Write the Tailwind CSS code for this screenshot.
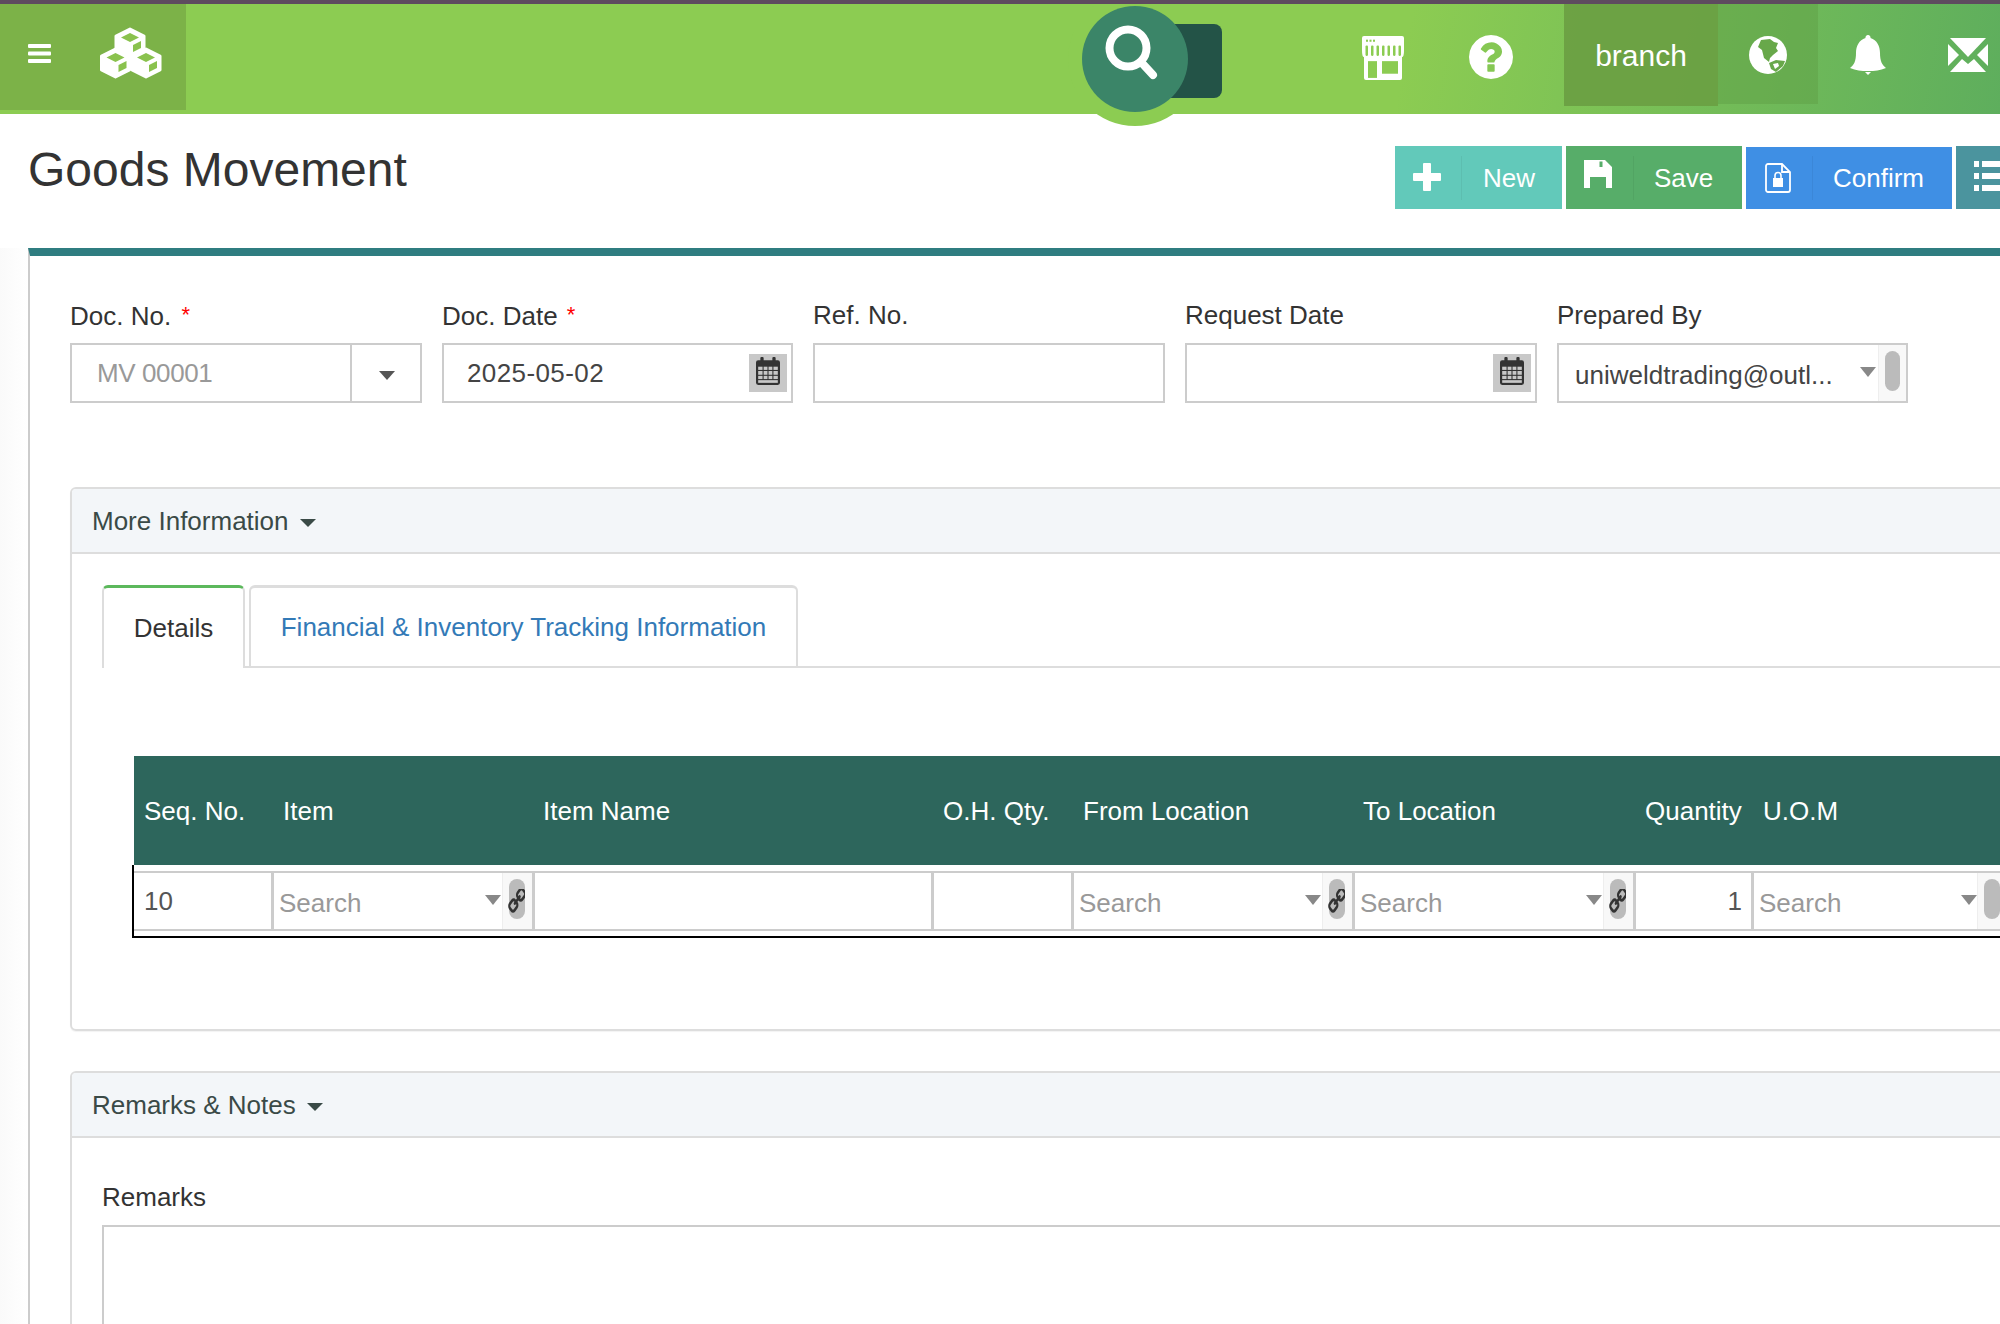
<!DOCTYPE html>
<html lang="en">
  <head>
    <meta charset="UTF-8" />
    <title>Goods Movement</title>
    <script src="https://cdn.jsdelivr.net/npm/@tailwindcss/browser@4"></script>
  </head>
  <body class="h-[1324px] w-[2000px] overflow-hidden bg-white font-['Liberation_Sans',Arial,sans-serif] text-[26px] leading-[36px] text-[#333]">
    <div class="relative z-20 h-[4px] bg-[#5e4b5f]"></div>

    <!-- top bar -->
    <header class="relative z-10 flex h-[110px] items-start bg-[linear-gradient(100deg,#8ccc52_70%,#5eae5d_100%)]">
      <div class="flex h-[106px] w-[186px] shrink-0 items-start bg-[#7cb248] pl-[28px] pt-[40px]">
        <svg class="w-[23px] h-[19px]" viewBox="0 0 23 19" fill="#fff"><rect width="23" height="4" rx="1"/><rect y="7.500" width="23" height="4" rx="1"/><rect y="15" width="23" height="4" rx="1"/></svg>
        <svg class="ml-[49px] mt-[-17px] w-[62px] h-[52px]" viewBox="0 0 62 52">
          <g transform="translate(30 16)"><path d="M0-14 14-7V7L0 14-14 7V-7Z" fill="#fff" stroke="#fff" stroke-width="3" stroke-linejoin="round"/><path d="M0-10 9-5.500 0-1-9-5.500Z" fill="#8ac24e"/><path d="M3 2 11-2V5L3 9Z" fill="#8ac24e"/></g>
          <g transform="translate(15.500 36)"><path d="M0-14 14-7V7L0 14-14 7V-7Z" fill="#fff" stroke="#fff" stroke-width="3" stroke-linejoin="round"/><path d="M0-10 9-5.500 0-1-9-5.500Z" fill="#8ac24e"/><path d="M3 2 11-2V5L3 9Z" fill="#8ac24e"/></g>
          <g transform="translate(46 36)"><path d="M0-14 14-7V7L0 14-14 7V-7Z" fill="#fff" stroke="#fff" stroke-width="3" stroke-linejoin="round"/><path d="M0-10 9-5.500 0-1-9-5.500Z" fill="#8ac24e"/><path d="M3 2 11-2V5L3 9Z" fill="#8ac24e"/></g>
        </svg>
      </div>

      <div class="ml-[1176px] mt-[32px] flex items-start">
        <svg class="w-[42px] h-[44px]" viewBox="0 0 42 42" preserveAspectRatio="none">
          <path d="M2 0H40A2 2 0 0 1 42 2V14Q42 20 40 20V40A2 2 0 0 1 38 42H4A2 2 0 0 1 2 40V20Q0 20 0 14V2A2 2 0 0 1 2 0Z" fill="#fff"/>
          <g fill="#8ccc52"><rect x="4" y="3.500" width="2" height="2"/><rect x="7.500" y="3.500" width="2" height="2"/><rect x="11" y="3.500" width="2" height="2"/><rect x="3.500" y="9" width="2.500" height="10" rx="1"/><rect x="9" y="9" width="2.500" height="10" rx="1"/><rect x="14.500" y="9" width="2.500" height="10" rx="1"/><rect x="20" y="9" width="2.500" height="10" rx="1"/><rect x="25.500" y="9" width="2.500" height="10" rx="1"/><rect x="31" y="9" width="2.500" height="10" rx="1"/><rect x="36.500" y="9" width="2.500" height="10" rx="1"/><rect x="6" y="24" width="9" height="16"/><rect x="20" y="24" width="16" height="12"/></g>
        </svg>
        <svg class="ml-[65px] mt-[-1px] w-[44px] h-[44px]" viewBox="128 128 1536 1536" fill="#fff"><path d="M1024 1376v-192q0-14-9-23t-23-9h-192q-14 0-23 9t-9 23v192q0 14 9 23t23 9h192q14 0 23-9t9-23zm256-672q0-88-55.500-163t-138.500-116-170-41q-243 0-371 213-15 24 8 42l132 100q7 6 19 6 16 0 25-12 53-68 86-92 34-24 86-24 48 0 85.500 26t37.500 59q0 38-20 61t-68 45q-63 28-115.500 86.500t-52.500 125.500v36q0 14 9 23t23 9h192q14 0 23-9t9-23q0-19 21.500-49.500t54.500-49.500q32-18 49-28.500t46-35 44.500-48 28-60.500 12.500-81zm384 192q0 209-103 385.500t-279.500 279.500-385.500 103-385.500-103-279.500-279.500-103-385.500 103-385.500 279.500-279.500 385.500-103 385.500 103 279.500 279.500 103 385.500z"/></svg>
      </div>

      <div class="ml-[51px] flex h-[102px] w-[154px] shrink-0 items-center justify-center bg-[#6a9f43]/90 pt-[2px] text-[30px] text-white">branch</div>
      <div class="flex h-[100px] w-[100px] shrink-0 items-start justify-center bg-[#5f9f45]/50 pt-[32px]">
        <svg class="w-[38px] h-[38px]" viewBox="0 0 38 38">
          <circle cx="19" cy="19" r="19" fill="#fff"/>
          <path d="M12 4 21 3 25 6 29 7 27 12 29 15 24 19 21 22 20 26 15 22 13 14 9 11Z" fill="#68a84a"/>
          <path d="M20 27 27 24 36 25 34 30 27 36 22 33Z" fill="#68a84a"/>
          <path d="M24 28 29 27 30 30 26 33Z" fill="#fff"/>
        </svg>
      </div>
      <svg class="ml-[32px] mt-[31px] w-[36px] h-[40px]" viewBox="0 0 36 40" fill="#fff">
        <path d="M18 0A2.500 2.500 0 0 1 20.500 3C27 5 30 11 30 18 30 26 32 30 36 33 30 35.500 25 36 18 36 11 36 6 35.500 0 33 4 30 6 26 6 18 6 11 9 5 15.500 3A2.500 2.500 0 0 1 18 0Z"/><path d="M15 37H21L18 40Z"/>
      </svg>
      <svg class="ml-[62px] mt-[34px] w-[40px] h-[34px]" viewBox="0 0 40 34" fill="#fff">
        <path d="M2 0H38L20 19Z"/><path d="M0 6V28L11 17Z"/><path d="M40 6V28L29 17Z"/><path d="M2 34H38L26 21 20 26 14 21Z"/>
      </svg>

      <!-- search button sits over the bar edge -->
      <div class="absolute left-[1068px] top-[-12px] h-[134px] w-[134px] rounded-full bg-[#8ccc52]">
        <div class="absolute left-[100px] top-[32px] h-[74px] w-[54px] rounded-r-[8px] bg-[#235347]"></div>
        <div class="absolute left-[14px] top-[14px] h-[106px] w-[106px] rounded-full bg-[#3b8568]">
          <svg class="w-[106px] h-[106px]" viewBox="0 0 106 106" fill="none" stroke="#fff" stroke-width="8" stroke-linecap="round"><circle cx="46" cy="42" r="18.500"/><path d="M59 56 71 69"/></svg>
        </div>
      </div>
    </header>

    <!-- title and actions -->
    <div class="flex h-[134px] justify-between">
      <h1 class="pl-[28px] pt-[28px] text-[48px] leading-[56px]">Goods Movement</h1>
      <div class="flex gap-[4px] pt-[32px] text-white">
        <button class="flex h-[63px] w-[167px] items-center bg-[#62c9ba]">
          <span class="flex w-[66px] justify-center pb-[2px] pr-[2px]"><svg class="w-[28px] h-[28px]" viewBox="0 0 28 28" fill="#fff"><path d="M10 1A1 1 0 0 1 11 0H17A1 1 0 0 1 18 1V10H27A1 1 0 0 1 28 11V17A1 1 0 0 1 27 18H18V27A1 1 0 0 1 17 28H11A1 1 0 0 1 10 27V18H1A1 1 0 0 1 0 17V11A1 1 0 0 1 1 10H10Z"/></svg></span>
          <span class="h-[44px] w-px bg-black/5"></span>
          <span class="pl-[21px]">New</span>
        </button>
        <button class="flex h-[63px] w-[176px] items-center bg-[#57ad69]">
          <span class="flex w-[67px] justify-center pb-[8px] pr-[3px]"><svg class="w-[28px] h-[28px]" viewBox="0 0 28 28"><path fill="#fff" d="M0 0H21L28 7V28H22V17H6V28H0Z"/><rect x="15.500" y="1.500" width="3" height="5.500" fill="#57ad69"/></svg></span>
          <span class="h-[44px] w-px bg-black/5"></span>
          <span class="pl-[20px]">Save</span>
        </button>
        <button class="mt-[1px] flex h-[62px] w-[206px] items-center bg-[#3f8fe4]">
          <span class="flex w-[66px] justify-center pr-[2px]"><svg class="w-[26px] h-[30px]" viewBox="0 0 26 30"><path d="M3 1H17L25 9V27A2 2 0 0 1 23 29H3A2 2 0 0 1 1 27V3A2 2 0 0 1 3 1Z" fill="none" stroke="#fff" stroke-width="1.800"/><path d="M17 1V9H25" fill="none" stroke="#fff" stroke-width="1.800"/><rect x="8" y="15" width="10" height="9" fill="#fff"/><path d="M10 15V12.500A3 3 0 0 1 16 12.500V15" fill="none" stroke="#fff" stroke-width="1.600"/></svg></span>
          <span class="h-[44px] w-px bg-black/5"></span>
          <span class="pl-[20px]">Confirm</span>
        </button>
        <button class="flex h-[63px] w-[44px] items-center bg-[#4b949e] pb-[3px] pl-[18px]">
          <svg class="w-[26px] h-[30px] shrink-0" viewBox="0 0 26 30" fill="#fff"><rect width="5" height="6"/><rect x="8" width="18" height="6"/><rect y="12" width="5" height="6"/><rect x="8" y="12" width="18" height="6"/><rect y="24" width="5" height="6"/><rect x="8" y="24" width="18" height="6"/></svg>
        </button>
      </div>
    </div>

    <!-- document -->
    <div class="h-[1076px] overflow-hidden bg-[linear-gradient(to_right,#fafafa,#ffffff_28px)] pl-[28px]">
      <main class="h-full border-l-2 border-t-[8px] border-l-[#ccc] border-t-[#2f7d80] bg-white pl-[40px]">
        <div class="grid grid-cols-[352px_351px_352px_352px_351px] gap-x-[20px] pt-[41px]">
          <div>
            <label class="mb-[10px] block h-[36px]">Doc. No. <span class="ml-[3px] align-[3px] text-[22px] text-[#f00]">*</span></label>
            <div class="flex h-[60px] border-2 border-[#ccc]">
              <div class="flex-1 pl-[25px] leading-[56px] tracking-[-0.4px] text-[#999]">MV 00001</div>
              <div class="flex w-[70px] items-center justify-center border-l-2 border-[#ccc] pl-[2px] pt-[5px]"><span class="h-0 w-0 border-x-[8px] border-t-[9px] border-x-transparent border-t-[#555]"></span></div>
            </div>
          </div>
          <div>
            <label class="mb-[10px] block h-[36px]">Doc. Date <span class="ml-[2px] align-[3px] text-[22px] text-[#f00]">*</span></label>
            <div class="flex h-[60px] justify-between border-2 border-[#ccc] pr-[4px]">
              <div class="pl-[23px] leading-[56px] tracking-[0.4px] text-[#444]">2025-05-02</div>
              <div class="mt-[9px] flex h-[38px] w-[38px] items-center justify-center bg-[#c8c8c8] pb-[4px]">
                <svg class="w-[24px] h-[28px]" viewBox="0 0 22 26" preserveAspectRatio="none"><path d="M2 3H4V1Q4 0 5 0H6Q7 0 7 1V3H15V1Q15 0 16 0H17Q18 0 18 1V3H20Q22 3 22 5V24Q22 26 20 26H2Q0 26 0 24V5Q0 3 2 3Z" fill="#333"/><g fill="#c8c8c8"><rect x="2" y="9" width="4" height="3"/><rect x="7" y="9" width="3.500" height="3"/><rect x="11.500" y="9" width="3.500" height="3"/><rect x="16" y="9" width="4" height="3"/><rect x="2" y="13" width="4" height="3.500"/><rect x="7" y="13" width="3.500" height="3.500"/><rect x="11.500" y="13" width="3.500" height="3.500"/><rect x="16" y="13" width="4" height="3.500"/><rect x="2" y="17.500" width="4" height="3"/><rect x="7" y="17.500" width="3.500" height="3"/><rect x="11.500" y="17.500" width="3.500" height="3"/><rect x="16" y="17.500" width="4" height="3"/><rect x="2" y="21.500" width="18" height="2.500"/></g></svg>
              </div>
            </div>
          </div>
          <div>
            <label class="mb-[10px] block h-[36px]">Ref. No.</label>
            <div class="h-[60px] border-2 border-[#ccc]"></div>
          </div>
          <div>
            <label class="mb-[10px] block h-[36px]">Request Date</label>
            <div class="flex h-[60px] justify-end border-2 border-[#ccc] pr-[4px]">
              <div class="mt-[9px] flex h-[38px] w-[38px] items-center justify-center bg-[#c8c8c8] pb-[4px]">
                <svg class="w-[24px] h-[28px]" viewBox="0 0 22 26" preserveAspectRatio="none"><path d="M2 3H4V1Q4 0 5 0H6Q7 0 7 1V3H15V1Q15 0 16 0H17Q18 0 18 1V3H20Q22 3 22 5V24Q22 26 20 26H2Q0 26 0 24V5Q0 3 2 3Z" fill="#333"/><g fill="#c8c8c8"><rect x="2" y="9" width="4" height="3"/><rect x="7" y="9" width="3.500" height="3"/><rect x="11.500" y="9" width="3.500" height="3"/><rect x="16" y="9" width="4" height="3"/><rect x="2" y="13" width="4" height="3.500"/><rect x="7" y="13" width="3.500" height="3.500"/><rect x="11.500" y="13" width="3.500" height="3.500"/><rect x="16" y="13" width="4" height="3.500"/><rect x="2" y="17.500" width="4" height="3"/><rect x="7" y="17.500" width="3.500" height="3"/><rect x="11.500" y="17.500" width="3.500" height="3"/><rect x="16" y="17.500" width="4" height="3"/><rect x="2" y="21.500" width="18" height="2.500"/></g></svg>
              </div>
            </div>
          </div>
          <div>
            <label class="mb-[10px] block h-[36px]">Prepared By</label>
            <div class="flex h-[60px] border-2 border-[#ccc]">
              <div class="flex-1 whitespace-nowrap pl-[16px] pt-[12px] text-[#444]">uniweldtrading@outl...</div>
              <span class="mr-[2px] mt-[22px] h-0 w-0 border-x-[8px] border-t-[10px] border-x-transparent border-t-[#888]"></span>
              <div class="flex w-[28px] justify-center border-l border-[#eee] bg-[#f8f8f8] pt-[6px]"><span class="h-[40px] w-[15px] rounded-full bg-[#bbb]"></span></div>
            </div>
          </div>
        </div>

        <section class="mt-[84px] w-[1990px] rounded-[6px] border-2 border-[#ddd] shadow-[0_1px_1px_rgba(0,0,0,0.05)]">
          <div class="flex h-[65px] items-center rounded-t-[4px] border-b-2 border-[#ddd] bg-[#f3f6f9] pl-[20px] text-[#3a4a47]">
            More Information
            <span class="ml-[11px] mt-[4px] h-0 w-0 border-x-[8px] border-t-[8px] border-x-transparent border-t-[#3a4a47]"></span>
          </div>
          <div class="pb-[91px] pl-[30px] pt-[31px]">
            <div class="flex h-[83px] items-end border-b-2 border-[#ddd]">
              <div class="mb-[-2px] flex h-[83px] w-[143px] items-center justify-center rounded-t-[6px] border-x-2 border-t-[3px] border-[#ddd] border-t-[#5cb85c] bg-white">Details</div>
              <div class="ml-[4px] flex h-[81px] w-[549px] items-center justify-center rounded-t-[6px] border-x-2 border-t-[3px] border-[#ddd] text-[#337ab7]">Financial &amp; Inventory Tracking Information</div>
            </div>

            <div class="ml-[30px] mt-[88px]">
              <div class="ml-[2px] grid h-[109px] grid-cols-[140px_261px_399px_140px_281px_281px_118px_300px] items-center bg-[#2d665c] text-white">
                <div class="pl-[10px]">Seq. No.</div>
                <div class="pl-[9px]">Item</div>
                <div class="pl-[8px]">Item Name</div>
                <div class="pl-[9px]">O.H. Qty.</div>
                <div class="pl-[9px]">From Location</div>
                <div class="pl-[8px]">To Location</div>
                <div class="pl-[9px]">Quantity</div>
                <div class="pl-[9px]">U.O.M</div>
              </div>
              <div class="border-b-2 border-l-2 border-black pb-[5px] pt-[6px]">
                <div class="grid h-[60px] grid-cols-[140px_261px_399px_140px_281px_281px_118px_300px] border-y-2 border-[#ccc]">
                  <div class="border-r-[3px] border-[#ccc] pl-[10px] leading-[56px] text-[#555]">10</div>

                  <div class="flex border-r-[3px] border-[#ccc]">
                    <div class="flex-1 pl-[5px] pt-[12px] text-[#999]">Search</div>
                    <span class="mr-[1px] mt-[22px] h-0 w-0 border-x-[8px] border-t-[10px] border-x-transparent border-t-[#888]"></span>
                    <div class="flex w-[30px] justify-center border-l border-[#eee] bg-[#f8f8f8] pr-[2px] pt-[6px]">
                      <span class="flex h-[40px] w-[16px] justify-center rounded-full bg-[#bbb] pt-[10px]">
                        <svg class="w-[17px] h-[24px] shrink-0 -scale-x-100" viewBox="128 128 1536 1536" preserveAspectRatio="none" fill="#333"><path d="M1456 1216q0-40-28-68l-208-208q-28-28-68-28-42 0-72 32 3 3 19 18.500t21.500 21.500 15 19 13 25.500 3.500 27.500q0 40-28 68t-68 28q-15 0-27.500-3.500t-25.500-13-19-15-21.500-21.500-18.500-19q-33 31-33 73 0 40 28 68l206 207q27 27 68 27 40 0 68-26l147-146q28-28 28-67zm-703-705q0-40-28-68l-206-207q-28-28-68-28-39 0-68 27l-147 146q-28 28-28 67 0 40 28 68l208 208q27 27 68 27 42 0 72-31-3-3-19-18.500t-21.500-21.500-15-19-13-25.500-3.500-27.500q0-40 28-68t68-28q15 0 27.500 3.500t25.500 13 19 15 21.500 21.500 18.500 19q33-31 33-73zm895 705q0 120-85 203l-147 146q-83 83-203 83-121 0-204-85l-206-207q-83-83-83-203 0-123 88-209l-88-88q-86 88-208 88-120 0-204-84l-208-208q-84-84-84-204t85-203l147-146q83-83 203-83 121 0 204 85l206 207q83 83 83 203 0 123-88 209l88 88q86-88 208-88 120 0 204 84l208 208q84 84 84 204z"/></svg>
                      </span>
                    </div>
                  </div>

                  <div class="border-r-[3px] border-[#ccc]"></div>
                  <div class="border-r-[3px] border-[#ccc]"></div>

                  <div class="flex border-r-[3px] border-[#ccc]">
                    <div class="flex-1 pl-[5px] pt-[12px] text-[#999]">Search</div>
                    <span class="mr-[1px] mt-[22px] h-0 w-0 border-x-[8px] border-t-[10px] border-x-transparent border-t-[#888]"></span>
                    <div class="flex w-[30px] justify-center border-l border-[#eee] bg-[#f8f8f8] pr-[2px] pt-[6px]">
                      <span class="flex h-[40px] w-[16px] justify-center rounded-full bg-[#bbb] pt-[10px]">
                        <svg class="w-[17px] h-[24px] shrink-0 -scale-x-100" viewBox="128 128 1536 1536" preserveAspectRatio="none" fill="#333"><path d="M1456 1216q0-40-28-68l-208-208q-28-28-68-28-42 0-72 32 3 3 19 18.500t21.500 21.500 15 19 13 25.500 3.500 27.500q0 40-28 68t-68 28q-15 0-27.500-3.500t-25.500-13-19-15-21.500-21.500-18.500-19q-33 31-33 73 0 40 28 68l206 207q27 27 68 27 40 0 68-26l147-146q28-28 28-67zm-703-705q0-40-28-68l-206-207q-28-28-68-28-39 0-68 27l-147 146q-28 28-28 67 0 40 28 68l208 208q27 27 68 27 42 0 72-31-3-3-19-18.500t-21.500-21.500-15-19-13-25.500-3.500-27.500q0-40 28-68t68-28q15 0 27.500 3.500t25.500 13 19 15 21.500 21.500 18.500 19q33-31 33-73zm895 705q0 120-85 203l-147 146q-83 83-203 83-121 0-204-85l-206-207q-83-83-83-203 0-123 88-209l-88-88q-86 88-208 88-120 0-204-84l-208-208q-84-84-84-204t85-203l147-146q83-83 203-83 121 0 204 85l206 207q83 83 83 203 0 123-88 209l88 88q86-88 208-88 120 0 204 84l208 208q84 84 84 204z"/></svg>
                      </span>
                    </div>
                  </div>

                  <div class="flex border-r-[3px] border-[#ccc]">
                    <div class="flex-1 pl-[5px] pt-[12px] text-[#999]">Search</div>
                    <span class="mr-[1px] mt-[22px] h-0 w-0 border-x-[8px] border-t-[10px] border-x-transparent border-t-[#888]"></span>
                    <div class="flex w-[30px] justify-center border-l border-[#eee] bg-[#f8f8f8] pr-[2px] pt-[6px]">
                      <span class="flex h-[40px] w-[16px] justify-center rounded-full bg-[#bbb] pt-[10px]">
                        <svg class="w-[17px] h-[24px] shrink-0 -scale-x-100" viewBox="128 128 1536 1536" preserveAspectRatio="none" fill="#333"><path d="M1456 1216q0-40-28-68l-208-208q-28-28-68-28-42 0-72 32 3 3 19 18.500t21.500 21.500 15 19 13 25.500 3.500 27.500q0 40-28 68t-68 28q-15 0-27.500-3.500t-25.500-13-19-15-21.500-21.500-18.500-19q-33 31-33 73 0 40 28 68l206 207q27 27 68 27 40 0 68-26l147-146q28-28 28-67zm-703-705q0-40-28-68l-206-207q-28-28-68-28-39 0-68 27l-147 146q-28 28-28 67 0 40 28 68l208 208q27 27 68 27 42 0 72-31-3-3-19-18.500t-21.500-21.500-15-19-13-25.500-3.500-27.500q0-40 28-68t68-28q15 0 27.500 3.500t25.500 13 19 15 21.500 21.500 18.500 19q33-31 33-73zm895 705q0 120-85 203l-147 146q-83 83-203 83-121 0-204-85l-206-207q-83-83-83-203 0-123 88-209l-88-88q-86 88-208 88-120 0-204-84l-208-208q-84-84-84-204t85-203l147-146q83-83 203-83 121 0 204 85l206 207q83 83 83 203 0 123-88 209l88 88q86-88 208-88 120 0 204 84l208 208q84 84 84 204z"/></svg>
                      </span>
                    </div>
                  </div>

                  <div class="border-r-[3px] border-[#ccc] pr-[9px] pt-[10px] text-right text-[#555]">1</div>

                  <div class="flex">
                    <div class="w-[207px] pl-[5px] pt-[12px] text-[#999]">Search</div>
                    <span class="mt-[22px] h-0 w-0 border-x-[8px] border-t-[10px] border-x-transparent border-t-[#888]"></span>
                    <div class="flex w-[29px] justify-center border-l border-[#eee] bg-[#f8f8f8] pt-[6px]"><span class="h-[40px] w-[16px] rounded-full bg-[#bbb]"></span></div>
                  </div>
                </div>
              </div>
            </div>
          </div>
        </section>

        <section class="mt-[40px] w-[1990px] rounded-t-[6px] border-2 border-[#ddd]">
          <div class="flex h-[65px] items-center rounded-t-[4px] border-b-2 border-[#ddd] bg-[#f3f6f9] pl-[20px] text-[#3a4a47]">
            Remarks &amp; Notes
            <span class="ml-[11px] mt-[4px] h-0 w-0 border-x-[8px] border-t-[8px] border-x-transparent border-t-[#3a4a47]"></span>
          </div>
          <div class="pl-[30px] pt-[41px]">
            <label class="mb-[10px] block">Remarks</label>
            <div class="h-[200px] border-2 border-[#ccc]"></div>
          </div>
        </section>
      </main>
    </div>
  </body>
</html>
